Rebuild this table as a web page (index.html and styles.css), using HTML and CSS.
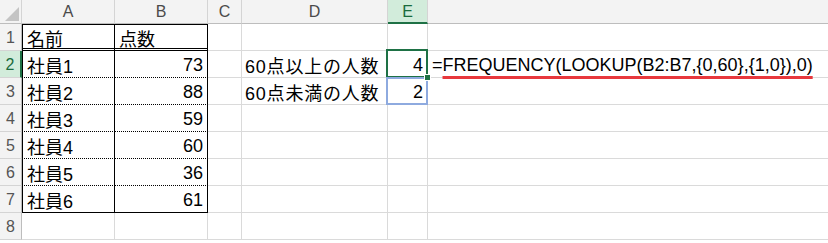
FILE: index.html
```html
<!DOCTYPE html>
<html lang="ja">
<head>
<meta charset="utf-8">
<link rel="stylesheet" href="styles.css">
</head>
<body>
<div class="sheet">
  <div class="ch corner"><span class="tri"></span></div>
  <div class="ch">A</div>
  <div class="ch">B</div>
  <div class="ch">C</div>
  <div class="ch">D</div>
  <div class="ch sel">E</div>
  <div class="ch last"></div>

  <div class="rh">1</div>
  <div class="c a r1">名前</div>
  <div class="c b r1">点数</div>
  <div class="c"></div>
  <div class="c"></div>
  <div class="c"></div>
  <div class="c last"></div>

  <div class="rh sel">2</div>
  <div class="c a">社員1</div>
  <div class="c b num">73</div>
  <div class="c"></div>
  <div class="c lbl">60点以上の人数</div>
  <div class="c num active">4</div>
  <div class="c last formula">=<span class="ul">FREQUENCY(LOOKUP(B2:B7,{0,60},{1,0}),0)</span></div>

  <div class="rh">3</div>
  <div class="c a">社員2</div>
  <div class="c b num">88</div>
  <div class="c"></div>
  <div class="c lbl">60点未満の人数</div>
  <div class="c num ref">2</div>
  <div class="c last"></div>

  <div class="rh">4</div>
  <div class="c a">社員3</div>
  <div class="c b num">59</div>
  <div class="c"></div>
  <div class="c"></div>
  <div class="c"></div>
  <div class="c last"></div>

  <div class="rh">5</div>
  <div class="c a">社員4</div>
  <div class="c b num">60</div>
  <div class="c"></div>
  <div class="c"></div>
  <div class="c"></div>
  <div class="c last"></div>

  <div class="rh">6</div>
  <div class="c a">社員5</div>
  <div class="c b num">36</div>
  <div class="c"></div>
  <div class="c"></div>
  <div class="c"></div>
  <div class="c last"></div>

  <div class="rh">7</div>
  <div class="c a r7">社員6</div>
  <div class="c b num r7">61</div>
  <div class="c"></div>
  <div class="c"></div>
  <div class="c"></div>
  <div class="c last"></div>

  <div class="rh">8</div>
  <div class="c"></div>
  <div class="c"></div>
  <div class="c"></div>
  <div class="c"></div>
  <div class="c"></div>
  <div class="c last"></div>
</div>
</body>
</html>
```

FILE: styles.css
```css
html, body {
  margin: 0;
  padding: 0;
  background: #ffffff;
}

.sheet {
  display: grid;
  grid-template-columns: 22px 93px 93px 34px 146px 40px 1fr;
  grid-template-rows: 24px repeat(8, 27px);
  width: 828px;
  height: 243px;
  overflow: hidden;
  font-family: "Liberation Sans", "Noto Sans CJK JP", sans-serif;
}

.ch {
  box-sizing: border-box;
  background: #f3f3f3;
  border-right: 1px solid #d4d4d4;
  border-bottom: 1px solid #bdbdbd;
  color: #4a4a4a;
  font-size: 16px;
  display: flex;
  align-items: center;
  justify-content: center;
  padding-top: 1px;
}

.ch.last {
  border-right: none;
}

.ch.sel {
  background: #d2ecdb;
  color: #1a6b3c;
  border-bottom: 2px solid #1e7145;
}

.corner {
  position: relative;
}

.tri {
  position: absolute;
  right: 2px;
  bottom: 2px;
  width: 0;
  height: 0;
  border-left: 14px solid transparent;
  border-bottom: 14px solid #c4c4c4;
}

.rh {
  box-sizing: border-box;
  background: #f3f3f3;
  border-right: 1px solid #bdbdbd;
  border-bottom: 1px solid #d4d4d4;
  color: #555555;
  font-size: 16px;
  display: flex;
  align-items: center;
  justify-content: center;
  padding-top: 2px;
}

.rh.sel {
  background: #d2ecdb;
  color: #1a6b3c;
  border-right: 2px solid #1e7145;
}

.c {
  box-sizing: border-box;
  border-right: 1px solid #dadada;
  border-bottom: 1px solid #dadada;
  font-size: 18px;
  color: #000000;
  display: flex;
  align-items: center;
  padding: 2px 4px 0 4px;
  white-space: nowrap;
}

.c.last {
  border-right: none;
}

.c.a {
  border-left: 1px solid #000;
  border-right: 1px solid #000;
  border-bottom: 1px dotted #000;
}

.c.b {
  border-right: 1px solid #000;
  border-bottom: 1px dotted #000;
}

.c.r1 {
  border-top: 1px solid #000;
  border-bottom: 3px double #000;
}

.c.r7 {
  border-bottom: 1px solid #000;
}

.num {
  justify-content: flex-end;
}

.lbl {
  padding-left: 3px;
  letter-spacing: 0.8px;
}

.active {
  position: relative;
}

.active::after {
  content: "";
  position: absolute;
  left: -2px;
  top: -2px;
  right: -1px;
  bottom: -1px;
  border: 2px solid #1e7145;
}

.active::before {
  content: "";
  position: absolute;
  right: -4px;
  bottom: -4px;
  width: 5px;
  height: 5px;
  background: #1e7145;
  border: 1px solid #ffffff;
  z-index: 2;
}

.ref {
  position: relative;
}

.ref::after {
  content: "";
  position: absolute;
  left: -2px;
  top: -1px;
  right: -1px;
  bottom: -1px;
  border: 2px solid #8eaadf;
}

.formula {
  overflow: visible;
  padding-left: 4px;
}

.ul {
  text-decoration: underline;
  text-decoration-color: #e8383d;
  text-decoration-thickness: 3px;
  text-underline-offset: 5px;
}
```
